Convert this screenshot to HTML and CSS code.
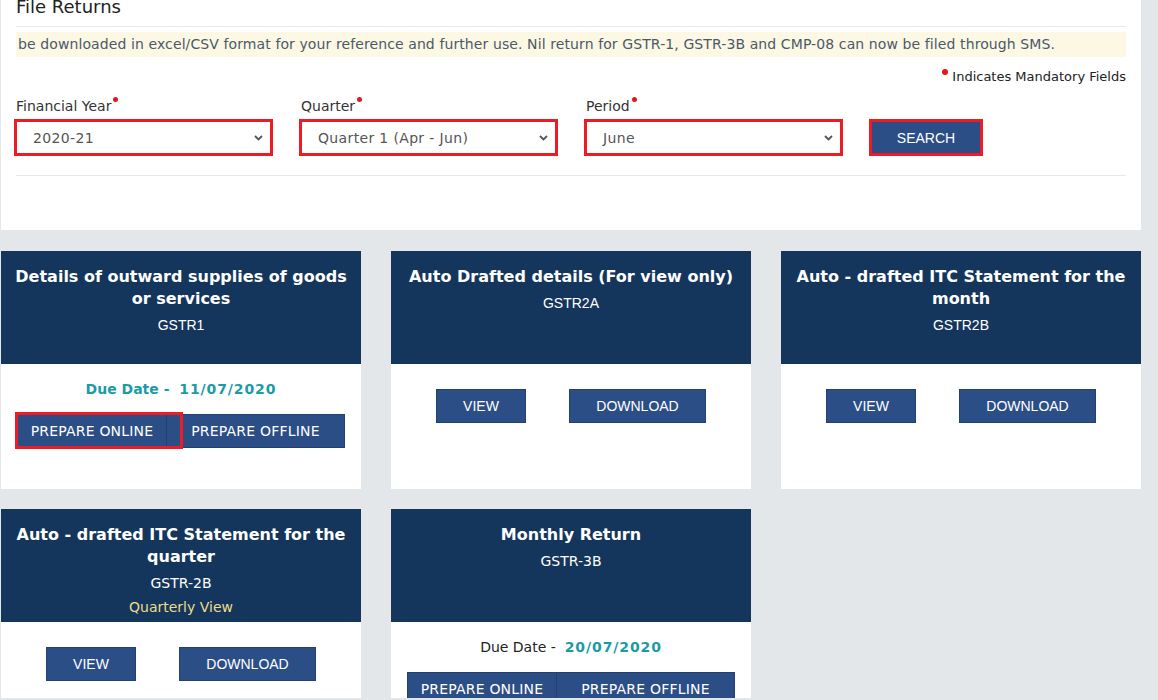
FILE: index.html
```html
<!DOCTYPE html>
<html lang="en">
<head>
<meta charset="utf-8">
<title>File Returns</title>
<link rel="stylesheet" href="styles.css">
</head>
<body>
<div class="page">
  <section class="panel">
    <h4 class="panel-title">File Returns</h4>
    <hr class="rule rule-top">
    <div class="alert">be downloaded in excel/CSV format for your reference and further use. Nil return for GSTR-1, GSTR-3B and CMP-08 can now be filed through SMS.</div>
    <div class="mandatory"><span class="dot dot-lg"></span> Indicates Mandatory Fields</div>
    <div class="filters">
      <div class="field">
        <label class="label">Financial Year<span class="dot"></span></label>
        <div class="select">
          <span>2020-21</span>
          <svg class="chev" width="9" height="6" viewBox="0 0 9 6"><path d="M1 1 L4.5 4.5 L8 1" fill="none" stroke="#555" stroke-width="1.8"/></svg>
        </div>
      </div>
      <div class="field">
        <label class="label">Quarter<span class="dot"></span></label>
        <div class="select">
          <span>Quarter 1 (Apr - Jun)</span>
          <svg class="chev" width="9" height="6" viewBox="0 0 9 6"><path d="M1 1 L4.5 4.5 L8 1" fill="none" stroke="#555" stroke-width="1.8"/></svg>
        </div>
      </div>
      <div class="field">
        <label class="label">Period<span class="dot"></span></label>
        <div class="select">
          <span>June</span>
          <svg class="chev" width="9" height="6" viewBox="0 0 9 6"><path d="M1 1 L4.5 4.5 L8 1" fill="none" stroke="#555" stroke-width="1.8"/></svg>
        </div>
      </div>
      <div class="field field-btn">
        <button class="search">SEARCH</button>
      </div>
    </div>
    <hr class="rule rule-bottom">
  </section>

  <div class="cards">
    <div class="card">
      <div class="card-head">
        <div class="card-title">Details of outward supplies of goods<br>or services</div>
        <div class="card-sub arial">GSTR1</div>
      </div>
      <div class="card-body">
        <div class="due due-teal">Due Date -&nbsp; <span class="date">11/07/2020</span></div>
        <div class="btn-group">
          <button class="btn btn-online">PREPARE ONLINE</button><button class="btn btn-offline">PREPARE OFFLINE</button>
          <span class="mark"></span>
        </div>
      </div>
    </div>

    <div class="card">
      <div class="card-head">
        <div class="card-title">Auto Drafted details (For view only)</div>
        <div class="card-sub arial">GSTR2A</div>
      </div>
      <div class="card-body body-view">
        <div class="btn-pair">
          <button class="btn2 btn-view">VIEW</button>
          <button class="btn2 btn-download">DOWNLOAD</button>
        </div>
      </div>
    </div>

    <div class="card">
      <div class="card-head">
        <div class="card-title">Auto - drafted ITC Statement for the<br>month</div>
        <div class="card-sub arial">GSTR2B</div>
      </div>
      <div class="card-body body-view">
        <div class="btn-pair">
          <button class="btn2 btn-view">VIEW</button>
          <button class="btn2 btn-download">DOWNLOAD</button>
        </div>
      </div>
    </div>

    <div class="card">
      <div class="card-head">
        <div class="card-title">Auto - drafted ITC Statement for the<br>quarter</div>
        <div class="card-sub">GSTR-2B</div>
        <div class="card-note">Quarterly View</div>
      </div>
      <div class="card-body body-view">
        <div class="btn-pair">
          <button class="btn2 btn-view">VIEW</button>
          <button class="btn2 btn-download">DOWNLOAD</button>
        </div>
      </div>
    </div>

    <div class="card">
      <div class="card-head">
        <div class="card-title">Monthly Return</div>
        <div class="card-sub">GSTR-3B</div>
      </div>
      <div class="card-body">
        <div class="due">Due Date -&nbsp; <span class="date date-teal">20/07/2020</span></div>
        <div class="btn-group">
          <button class="btn btn-online">PREPARE ONLINE</button><button class="btn btn-offline">PREPARE OFFLINE</button>
        </div>
      </div>
    </div>
  </div>
</div>
</body>
</html>
```

FILE: styles.css
```css
* { box-sizing: border-box; }

html, body {
  margin: 0;
  padding: 0;
  background: #e4e7ea;
  font-family: "DejaVu Sans", Verdana, sans-serif;
  color: #333;
  overflow: hidden;
}

.page {
  width: 1141px;
  padding-left: 1px;
  height: 700px;
}

.panel {
  background: #fff;
  padding: 0 15px 54px 15px;
}

.panel-title {
  margin: -2px 0 0 0;
  font-size: 18px;
  line-height: 18px;
  font-weight: normal;
  color: #222;
}

.rule {
  border: 0;
  border-top: 1px solid #e8e8e8;
  margin: 0;
  height: 0;
}

.rule-top { margin-top: 10px; }

.alert {
  margin-top: 5px;
  background: #fcf8e3;
  color: #4b5a6b;
  font-size: 14px;
  letter-spacing: 0.1px;
  line-height: 25px;
  height: 25px;
  padding-left: 2px;
  white-space: nowrap;
  overflow: hidden;
}

.mandatory {
  margin-top: 10px;
  text-align: right;
  font-size: 13px;
  line-height: 20px;
  color: #222;
}

.dot {
  display: inline-block;
  width: 5px;
  height: 5px;
  border-radius: 50%;
  background: #e8141c;
  vertical-align: 9px;
  margin-left: 2px;
}

.dot-lg {
  width: 6px;
  height: 6px;
  vertical-align: 6px;
}

.filters {
  margin-top: 9px;
  display: grid;
  grid-template-columns: 285px 285px 284px auto;
  align-items: end;
}

.label {
  display: block;
  font-size: 14px;
  line-height: 20px;
  color: #333;
  margin-bottom: 5px;
}

.select {
  width: 255px;
  height: 33px;
  border: 1px solid #ccc;
  outline: 3px solid #ed1c24;
  outline-offset: -1px;
  background: #fff;
  display: flex;
  align-items: center;
  justify-content: space-between;
  padding: 0 7px 0 16px;
  font-size: 14px;
  letter-spacing: 0.35px;
  color: #555;
}

.chev { display: block; }

.field-btn { padding-left: 2px; }

.search {
  display: block;
  width: 108px;
  height: 31px;
  margin-bottom: 1px;
  border: 0;
  background: #2c4e86;
  outline: 3px solid #ed1c24;
  color: #fff;
  font-family: "Liberation Sans", Arial, sans-serif;
  font-size: 14px;
  padding: 0;
}

.rule-bottom { margin-top: 21px; }

.cards {
  margin-top: 21px;
  display: grid;
  grid-template-columns: 360px 360px 360px;
  column-gap: 30px;
  row-gap: 20px;
}

.card {
  background: #fff;
  display: flex;
  flex-direction: column;
}

.card-head {
  background: #15365c;
  height: 113px;
  padding: 15px 6px 0;
  text-align: center;
  color: #fff;
}

.card-title {
  font-size: 16px;
  font-weight: bold;
  line-height: 22px;
}

.card-sub {
  margin-top: 5px;
  font-size: 14px;
  line-height: 20px;
}

.card-sub.arial {
  font-family: "Liberation Sans", Arial, sans-serif;
}

.card-note {
  margin-top: 4px;
  font-size: 14px;
  line-height: 20px;
  color: #ebdc8c;
}

.card-body {
  flex: 1;
  padding: 15px 0 41px;
  text-align: center;
}

.body-view { padding-top: 25px; }

.due {
  font-size: 14px;
  line-height: 20px;
  color: #222;
  margin-bottom: 15px;
}

.due-teal {
  color: #1b9ba6;
  font-weight: bold;
}

.date { letter-spacing: 0.9px; }

.date-teal {
  color: #1b9ba6;
  font-weight: bold;
}

.btn-group {
  position: relative;
  display: inline-flex;
  vertical-align: top;
}

.btn {
  height: 34px;
  border: 1px solid #22416f;
  background: #2c4e86;
  color: #fff;
  font-family: "DejaVu Sans", Verdana, sans-serif;
  font-size: 14px;
  letter-spacing: 0.2px;
  padding: 0;
  margin: 0;
}

.btn-online { width: 150px; }
.btn-offline { width: 179px; border-left: 1px solid #22416f; margin-left: -1px; }

.mark {
  position: absolute;
  left: -2px;
  top: -2px;
  width: 168px;
  height: 37px;
  border: 3px solid #ed1c24;
}

.btn-pair {
  display: flex;
  justify-content: center;
  gap: 43px;
}

.btn2 {
  height: 34px;
  border: 1px solid #22416f;
  background: #2c4e86;
  color: #fff;
  font-family: "Liberation Sans", Arial, sans-serif;
  font-size: 14px;
  padding: 0;
}

.btn-view { width: 90px; }
.btn-download { width: 137px; }
```
